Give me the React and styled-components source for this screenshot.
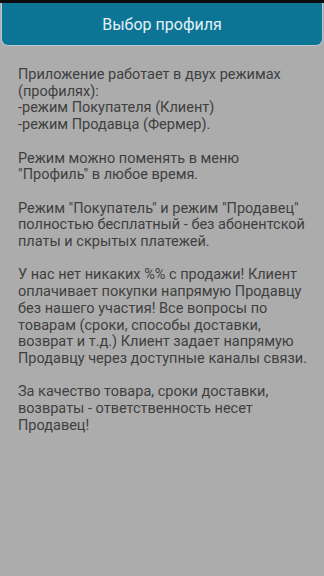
import React from "react";
import styled, { createGlobalStyle } from "styled-components";

const Global = createGlobalStyle`
  html, body { margin: 0; padding: 0; background: #acacac; }
  body { font-family: Roboto, "Noto Sans", sans-serif; }
`;

const Screen = styled.div`
  width: 324px;
  height: 576px;
  background: #acacac;
  border-top: 3px solid #0c0c0c;
  box-sizing: border-box;
  display: flex;
  flex-direction: column;
`;

const Header = styled.div`
  margin: 0 1px;
  height: 43px;
  background: #0c7495;
  border: 1px solid #b9cbd1;
  border-top: none;
  border-radius: 0 0 7px 7px;
  display: flex;
  align-items: center;
  justify-content: center;
  color: #e3f1f6;
  font-size: 16px;
  padding-top: 1px;
  box-sizing: border-box;
`;

const Content = styled.div`
  padding: 21px 6px 0 18px;
  color: #3f3f3f;
  font-size: 14.5px;
  line-height: 16.7px;
`;

const Paragraph = styled.p`
  margin: 0 0 16.7px 0;
  white-space: nowrap;
`;

export default function App() {
  return (
    <>
      <Global />
      <Screen>
        <Header>Выбор профиля</Header>
        <Content>
          <Paragraph>
            Приложение работает в двух режимах<br />
            (профилях):<br />
            -режим Покупателя (Клиент)<br />
            -режим Продавца (Фермер).
          </Paragraph>
          <Paragraph>
            Режим можно поменять в меню<br />
            "Профиль" в любое время.
          </Paragraph>
          <Paragraph>
            Режим "Покупатель" и режим "Продавец"<br />
            полностью бесплатный - без абонентской<br />
            платы и скрытых платежей.
          </Paragraph>
          <Paragraph>
            У нас нет никаких %% с продажи! Клиент<br />
            оплачивает покупки напрямую Продавцу<br />
            без нашего участия! Все вопросы по<br />
            товарам (сроки, способы доставки,<br />
            возврат и т.д.) Клиент задает напрямую<br />
            Продавцу через доступные каналы связи.
          </Paragraph>
          <Paragraph>
            За качество товара, сроки доставки,<br />
            возвраты - ответственность несет<br />
            Продавец!
          </Paragraph>
        </Content>
      </Screen>
    </>
  );
}
